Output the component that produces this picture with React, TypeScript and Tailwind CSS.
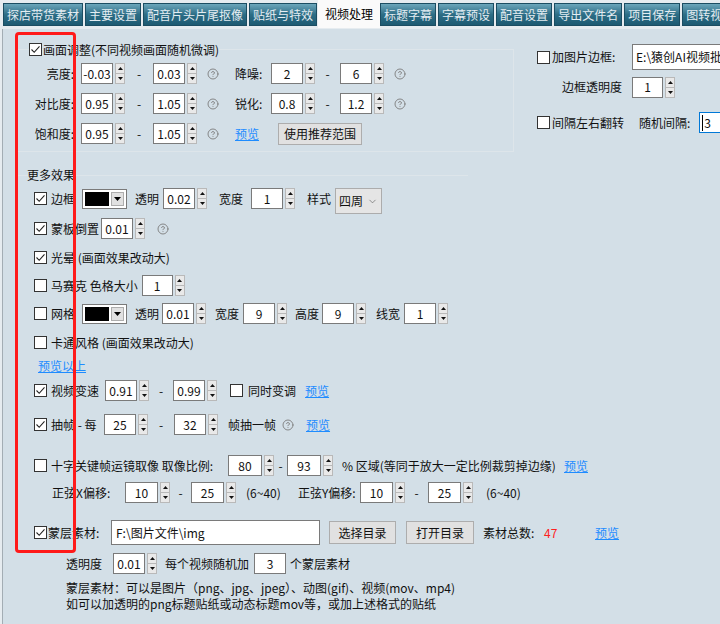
import { CircleHelp, ChevronDown } from "lucide-react";

const Check = ({ on = false }: { on?: boolean }) => (
  <div className="flex h-[13px] w-[13px] shrink-0 items-center justify-center border border-[#333] bg-white">
    {on && (
      <svg width="11" height="11" viewBox="0 0 11 11">
        <path d="M1.5 5.5L4.2 8.3L9.5 2.3" fill="none" stroke="#222" strokeWidth="1.1" />
      </svg>
    )}
  </div>
);

const Spin = ({ v, w = "w-[32px]" }: { v: string; w?: string }) => (
  <div className="flex shrink-0 items-center">
    <div className={`flex h-[21px] ${w} items-center justify-center border border-[#7a7a7a] bg-white`}>{v}</div>
    <div className="ml-[2px] flex h-[21px] w-[10px] flex-col">
      <div className="flex h-[11px] items-center justify-center border border-[#b9b9b9] bg-[#e9e9e9]">
        <svg width="5" height="3" viewBox="0 0 5 3">
          <path d="M2.5 0L5 3H0Z" fill="#111" />
        </svg>
      </div>
      <div className="flex h-[10px] items-center justify-center border border-t-0 border-[#b9b9b9] bg-[#e9e9e9]">
        <svg width="5" height="3" viewBox="0 0 5 3">
          <path d="M0 0H5L2.5 3Z" fill="#111" />
        </svg>
      </div>
    </div>
  </div>
);

const Help = ({ cls = "" }: { cls?: string }) => (
  <CircleHelp size={12} strokeWidth={1.8} className={`shrink-0 text-[#7c7c7c] ${cls}`} />
);

const Link = ({ t, cls = "" }: { t: string; cls?: string }) => (
  <span className={`shrink-0 text-[#1e8cff] underline ${cls}`}>{t}</span>
);

const ColorPick = () => (
  <div className="flex h-[20px] w-[45px] shrink-0 items-center border border-[#7a7a7a] bg-white p-[2px]">
    <div className="h-full w-[24px] bg-black" />
    <div className="ml-[2px] flex h-full flex-1 items-center justify-center border border-[#adadad] bg-[#e1e1e1]">
      <svg width="7" height="4" viewBox="0 0 7 4">
        <path d="M0 0H7L3.5 4Z" fill="#000" />
      </svg>
    </div>
  </div>
);

const Btn = ({ t, w }: { t: string; w: string }) => (
  <div className={`flex h-[23px] ${w} shrink-0 items-center justify-center border border-[#adadad] bg-[#e1e1e1]`}>
    {t}
  </div>
);

const tabs = [
  "探店带货素材",
  "主要设置",
  "配音片头片尾抠像",
  "贴纸与特效",
  "视频处理",
  "标题字幕",
  "字幕预设",
  "配音设置",
  "导出文件名",
  "项目保存",
  "图转视频",
];

export default function App() {
  return (
    <div className="relative h-[624px] w-[720px] overflow-hidden bg-[#e6ecf0] font-['Noto_Sans_CJK_SC',sans-serif] text-[12px] leading-[16px] text-[#111]">
      {/* tab strip */}
      <div className="flex h-[29px] gap-[2px] pl-[3px]">
        {tabs.map((t) =>
          t === "视频处理" ? (
            <div key={t} className="-ml-[1px] -mr-[2px] flex h-[28px] shrink-0 items-center bg-[#fafafa] px-[7px] text-black">
              {t}
            </div>
          ) : (
            <div
              key={t}
              className="mt-[3px] flex h-[23px] shrink-0 items-center border border-[#1b4d62] bg-gradient-to-b from-[#6ba6bb] via-[#2d6e86] to-[#1d5a72] px-[3px] text-[#e4edf2]"
            >
              {t}
            </div>
          )
        )}
      </div>

      {/* page */}
      <div className="ml-[2px] h-[595px] border-l border-[#a3adb4] bg-[#d3dfe7]">
        {/* top section */}
        <div className="flex items-start pt-[20px]">
          <div className="ml-[13px] w-[498px] shrink-0 border border-[#dde5ea] pb-[7px] pl-[5px]">
            <div className="-mt-[7px] ml-[7px] flex h-[13px] items-center">
              <Check on />
              <span className="ml-[1px] bg-[#d3dfe7]">画面调整(不同视频画面随机微调)</span>
            </div>
            <div className="mt-[7px] flex h-[21px] items-center">
              <div className="w-[52px] text-right">亮度:</div>
              <div className="ml-[7px]">
                <Spin v="-0.03" />
              </div>
              <div className="w-[28px] text-center">-</div>
              <Spin v="0.03" />
              <Help cls="ml-[10px]" />
              <div className="ml-[16px] w-[36px]">降噪:</div>
              <Spin v="2" />
              <div className="w-[25px] text-center">-</div>
              <Spin v="6" />
              <Help cls="ml-[10px]" />
            </div>
            <div className="mt-[9px] flex h-[21px] items-center">
              <div className="w-[52px] text-right">对比度:</div>
              <div className="ml-[7px]">
                <Spin v="0.95" />
              </div>
              <div className="w-[28px] text-center">-</div>
              <Spin v="1.05" />
              <Help cls="ml-[10px]" />
              <div className="ml-[16px] w-[36px]">锐化:</div>
              <Spin v="0.8" />
              <div className="w-[25px] text-center">-</div>
              <Spin v="1.2" />
              <Help cls="ml-[10px]" />
            </div>
            <div className="mt-[9px] flex h-[21px] items-center">
              <div className="w-[52px] text-right">饱和度:</div>
              <div className="ml-[7px]">
                <Spin v="0.95" />
              </div>
              <div className="w-[28px] text-center">-</div>
              <Spin v="1.05" />
              <Help cls="ml-[10px]" />
              <Link t="预览" cls="ml-[16px]" />
              <div className="ml-[19px] flex h-[22px] w-[84px] items-center justify-center border border-[#adadad] bg-[#e1e1e1]">
                使用推荐范围
              </div>
            </div>
          </div>

          <div className="-mt-[5px] ml-[23px] flex shrink-0 flex-col">
            <div className="flex h-[26px] items-center">
              <Check />
              <span className="ml-[2px] w-[80px]">加图片边框:</span>
              <div className="flex h-[26px] w-[160px] items-center overflow-hidden whitespace-nowrap border border-[#7a7a7a] bg-white pl-[3px]">
                E:\猿创AI视频批量剪辑\边框
              </div>
            </div>
            <div className="mt-[7px] flex h-[20px] items-center pl-[25px]">
              <span className="w-[70px]">边框透明度</span>
              <Spin v="1" w="w-[31px]" />
            </div>
            <div className="mt-[15px] flex h-[21px] items-center">
              <Check />
              <span className="ml-[2px]">间隔左右翻转</span>
              <span className="ml-[15px]">随机间隔:</span>
              <div className="ml-[9px] flex h-[21px] w-[50px] items-center border border-[#0078d7] bg-white pl-[2px]">
                <span className="border-l border-black pl-[1px]">3</span>
              </div>
            </div>
          </div>
        </div>

        {/* more effects */}
        <div className="ml-[13px] mt-[23px] w-[452px] border-t border-[#dde5ea]">
          <div className="-mt-[9px] ml-[11px] h-[16px] w-fit">更多效果</div>
        </div>

        <div className="flex flex-col pl-[31px]">
          <div className="mt-[5px] flex h-[21px] items-center">
            <Check on />
            <span className="ml-[4px]">边框</span>
            <div className="ml-[7px]">
              <ColorPick />
            </div>
            <span className="ml-[8px]">透明</span>
            <div className="ml-[4px]">
              <Spin v="0.02" />
            </div>
            <span className="ml-[12px]">宽度</span>
            <div className="ml-[8px]">
              <Spin v="1" />
            </div>
            <span className="ml-[12px]">样式</span>
            <div className="ml-[4px] flex h-[26px] w-[47px] items-center justify-between self-start border border-[#acacac] bg-[#e5e5e5] pl-[3px] pr-[3px]">
              <span>四周</span>
              <ChevronDown size={11} strokeWidth={1.3} className="text-[#555]" />
            </div>
          </div>

          <div className="mt-[9px] flex h-[21px] items-center">
            <Check on />
            <span className="ml-[4px]">蒙板倒置</span>
            <div className="ml-[2px]">
              <Spin v="0.01" />
            </div>
            <Help cls="ml-[12px]" />
          </div>

          <div className="mt-[8px] flex h-[21px] items-center">
            <Check on />
            <span className="ml-[4px]">光晕 (画面效果改动大)</span>
          </div>

          <div className="mt-[7px] flex h-[21px] items-center">
            <Check />
            <span className="ml-[4px]">马赛克 色格大小</span>
            <div className="ml-[4px]">
              <Spin v="1" w="w-[31px]" />
            </div>
          </div>

          <div className="mt-[7px] flex h-[21px] items-center">
            <Check />
            <span className="ml-[4px]">网格</span>
            <div className="ml-[7px]">
              <ColorPick />
            </div>
            <span className="ml-[8px]">透明</span>
            <div className="ml-[3px]">
              <Spin v="0.01" />
            </div>
            <span className="ml-[9px]">宽度</span>
            <div className="ml-[4px]">
              <Spin v="9" />
            </div>
            <span className="ml-[8px]">高度</span>
            <div className="ml-[3px]">
              <Spin v="9" />
            </div>
            <span className="ml-[10px]">线宽</span>
            <div className="ml-[4px]">
              <Spin v="1" />
            </div>
          </div>

          <div className="mt-[8px] flex h-[21px] items-center">
            <Check />
            <span className="ml-[4px]">卡通风格 (画面效果改动大)</span>
          </div>

          <div className="mt-[2px] flex h-[21px] items-center">
            <Link t="预览以上" cls="ml-[4px]" />
          </div>

          <div className="mt-[4px] flex h-[21px] items-center">
            <Check on />
            <span className="ml-[4px]">视频变速</span>
            <div className="ml-[6px]">
              <Spin v="0.91" />
            </div>
            <div className="w-[24px] text-center">-</div>
            <Spin v="0.99" />
            <div className="ml-[13px]">
              <Check />
            </div>
            <span className="ml-[5px]">同时变调</span>
            <Link t="预览" cls="ml-[9px]" />
          </div>

          <div className="mt-[13px] flex h-[21px] items-center">
            <Check on />
            <span className="ml-[4px] w-[48px]">抽帧 - 每</span>
            <div className="ml-[5px]">
              <Spin v="25" />
            </div>
            <div className="w-[26px] text-center">-</div>
            <Spin v="32" />
            <span className="ml-[10px]">帧抽一帧</span>
            <Help cls="ml-[6px]" />
            <Link t="预览" cls="ml-[12px]" />
          </div>

          <div className="mt-[20px] flex h-[21px] items-center">
            <Check />
            <span className="ml-[4px] w-[177px] shrink-0">十字关键帧运镜取像 取像比例:</span>
            <Spin v="80" w="w-[34px]" />
            <div className="w-[13px] text-center">-</div>
            <Spin v="93" w="w-[34px]" />
            <span className="ml-[9px] w-[212px] shrink-0 whitespace-nowrap">% 区域(等同于放大一定比例裁剪掉边缘)</span>
            <Link t="预览" cls="ml-[10px]" />
          </div>

          <div className="mt-[6px] flex h-[21px] items-center">
            <span className="ml-[18px] w-[73px] shrink-0">正弦X偏移:</span>
            <Spin v="10" w="w-[33px]" />
            <div className="w-[21px] text-center">-</div>
            <Spin v="25" w="w-[33px]" />
            <span className="ml-[10px] w-[44px] shrink-0">(6~40)</span>
            <span className="ml-[8px] w-[62px] shrink-0">正弦Y偏移:</span>
            <Spin v="10" w="w-[33px]" />
            <div className="w-[23px] text-center">-</div>
            <Spin v="25" w="w-[33px]" />
            <span className="ml-[13px]">(6~40)</span>
          </div>

          <div className="mt-[17px] flex h-[25px] items-center">
            <Check on />
            <span className="ml-[1px] w-[63px] shrink-0">蒙层素材:</span>
            <div className="flex h-[25px] w-[209px] shrink-0 items-center border border-[#7a7a7a] bg-white pl-[4px]">
              F:\图片文件\img
            </div>
            <div className="ml-[9px]">
              <Btn t="选择目录" w="w-[67px]" />
            </div>
            <div className="ml-[10px]">
              <Btn t="打开目录" w="w-[68px]" />
            </div>
            <span className="ml-[9px] w-[61px] shrink-0">素材总数:</span>
            <span className="w-[14px] text-[#ff2020]">47</span>
            <Link t="预览" cls="ml-[37px]" />
          </div>

          <div className="mt-[8px] flex h-[21px] items-center pl-[32px]">
            <span className="w-[36px] shrink-0">透明度</span>
            <div className="ml-[11px]">
              <Spin v="0.01" />
            </div>
            <span className="ml-[8px]">每个视频随机加</span>
            <div className="ml-[5px] flex h-[21px] w-[32px] items-center justify-center border border-[#7a7a7a] bg-white">
              3
            </div>
            <span className="ml-[4px]">个蒙层素材</span>
          </div>

          <div className="mt-[6px] pl-[32px]">蒙层素材：可以是图片（png、jpg、jpeg）、动图(gif)、视频(mov、mp4)</div>
          <div className="pl-[32px]">如可以加透明的png标题贴纸或动态标题mov等，或加上述格式的贴纸</div>
        </div>
      </div>

      {/* red annotation frame */}
      <div className="pointer-events-none absolute left-[15px] top-[32px] h-[521px] w-[61px] rounded-[4px] border-[3px] border-[#ff1a1a]" />
    </div>
  );
}
